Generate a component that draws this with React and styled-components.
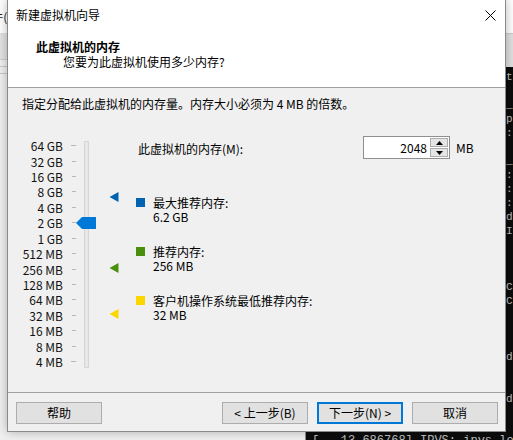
import React from 'react';
import styled, { createGlobalStyle } from 'styled-components';

const GlobalStyle = createGlobalStyle`
  html, body {
    margin: 0;
    padding: 0;
  }
  body {
    width: 513px;
    height: 440px;
    overflow: hidden;
    background: #f0f0f0;
    font-family: "Noto Sans CJK SC", "Noto Sans", sans-serif;
    font-size: 12px;
    color: #000;
  }
`;

const Desktop = styled.div`
  position: relative;
  width: 513px;
  height: 440px;
  overflow: hidden;
  background: #f0f0f0;
`;

/* windows behind the dialog */
const BackWindow = styled.div`
  position: absolute;
  left: -193px;
  top: 0;
  width: 211px;
  height: 440px;
  display: flex;
  flex-direction: column;
  background: #f0f0f0;
`;

const BackMenu = styled.div`
  height: 33px;
  background: #fff;
  display: flex;
  align-items: center;
  justify-content: flex-end;
  color: #222;
`;

const BackToolbar = styled.div`
  height: 26px;
  background: #e3e3e3;
  border-bottom: 1px solid #cfcfcf;
`;

const BackRule = styled.div`
  height: 1px;
  margin-top: 6px;
  background: #c8c8c8;
`;

const Terminal = styled.div`
  position: absolute;
  left: 305px;
  top: 0;
  width: 260px;
  height: 440px;
  display: flex;
  flex-direction: column;
  border-left: 1px solid #8c8c8c;
`;

const TermTitle = styled.div`
  height: 33px;
  background: #fff;
  border-bottom: 1px solid #cccccc;
`;

const TermToolbar = styled.div`
  height: 33px;
  background: #e1e1e1;
`;

const TermBody = styled.div`
  flex: 1;
  overflow: hidden;
  padding: 0 0 0 6px;
  background: #0c0c0c;
  display: flex;
  flex-direction: column;
  justify-content: flex-end;
`;

const TermLine = styled.div`
  padding-left: ${p => p.indent || 0}px;
  margin-bottom: ${p => (p.last ? '-8px' : '0')};
  color: #c0c0c0;
  font-family: "Liberation Mono", monospace;
  font-size: ${p => (p.last ? '12px' : '11px')};
  line-height: 14px;
  white-space: pre;
`;

/* dialog */
const Dialog = styled.div`
  position: absolute;
  left: 7px;
  top: -1px;
  width: 499px;
  height: 433px;
  box-sizing: border-box;
  border: 1px solid #8a8a8a;
  box-shadow: 0 0 10px rgba(0, 0, 0, 0.28);
  display: flex;
  flex-direction: column;
  background: #f0f0f0;
`;

const TitleBar = styled.div`
  height: 30px;
  flex: none;
  background: #fff;
  display: flex;
  align-items: center;
  padding: 0 9px 0 8px;
  line-height: 16px;
`;

const CloseIcon = styled.svg`
  margin-left: auto;
  margin-top: 1px;
  width: 11px;
  height: 11px;
`;

const Header = styled.div`
  height: 58px;
  flex: none;
  box-sizing: border-box;
  background: #fff;
  border-bottom: 1px solid #a0a0a0;
  padding: 9px 0 0 28px;
  display: flex;
  flex-direction: column;
`;

const HeaderTitle = styled.div`
  font-weight: 700;
  line-height: 15px;
`;

const HeaderSub = styled.div`
  line-height: 16px;
  padding-left: 27px;
`;

const Body = styled.div`
  flex: 1;
  padding: 8px 0 0 14px;
  display: flex;
  flex-direction: column;
`;

const Instruction = styled.div`
  line-height: 16px;
`;

const Main = styled.div`
  display: flex;
  margin-top: 24px;
`;

const Slider = styled.div`
  position: relative;
  width: 114px;
  margin-top: 2px;
  display: flex;
  align-items: flex-start;
`;

const Scale = styled.div`
  display: grid;
  grid-auto-rows: 15.43px;
`;

const ScaleRow = styled.div`
  display: flex;
  align-items: center;
`;

const ScaleLabel = styled.span`
  width: 41px;
  text-align: right;
  line-height: 15px;
  color: #111;
`;

const Tick = styled.span`
  margin-left: ${p => (p.edge ? '8px' : '9px')};
  width: ${p => (p.edge ? '5px' : '4px')};
  height: 1px;
  background: #b8b8b8;
`;

const Track = styled.div`
  margin: 3px 0 0 8px;
  width: 5px;
  height: 227px;
  box-sizing: border-box;
  border: 1px solid #d6d6d6;
  background: #e7e7e7;
`;

const Thumb = styled.svg`
  position: absolute;
  left: 54px;
  width: 20px;
  height: 12px;
`;

const Marker = styled.svg`
  position: absolute;
  left: 87px;
  width: 10px;
  height: 10px;
`;

const Panel = styled.div`
  display: flex;
  flex-direction: column;
`;

const MemoryRow = styled.div`
  display: flex;
  align-items: flex-start;
  height: 23px;
`;

const MemoryLabel = styled.span`
  width: 225px;
  padding-left: 2px;
  margin-top: 5px;
  line-height: 16px;
`;

const SpinBox = styled.div`
  width: 87px;
  height: 23px;
  box-sizing: border-box;
  border: 1px solid #8f8f8f;
  background: #fff;
  display: flex;
`;

const SpinValue = styled.span`
  flex: 1;
  text-align: right;
  padding-right: 3px;
  line-height: 21px;
`;

const Spinner = styled.div`
  width: 18px;
  display: flex;
  flex-direction: column;
  gap: 1px;
  padding: 1px 1px 1px 0;
`;

const SpinButton = styled.div`
  flex: 1;
  box-sizing: border-box;
  border: 1px solid #adadad;
  background: #e5e5e5;
  display: flex;
  align-items: center;
  justify-content: center;
`;

const Unit = styled.span`
  margin-left: 6px;
  line-height: 23px;
`;

const Legend = styled.div`
  display: flex;
  flex-direction: column;
  gap: 21px;
  margin-top: 37px;
`;

const LegendItem = styled.div`
  display: flex;
  gap: 8px;
`;

const Swatch = styled.span`
  width: 9px;
  height: 9px;
  margin-top: 2px;
  flex: none;
  background: ${p => p.color};
`;

const LegendText = styled.div`
  line-height: 14px;
`;

const Footer = styled.div`
  flex: none;
  height: 39px;
  box-sizing: border-box;
  border-top: 1px solid #a0a0a0;
  display: flex;
  align-items: flex-start;
  gap: 9px;
  padding: 9px 7px 0 8px;
`;

const Button = styled.button`
  width: 86px;
  height: 22px;
  margin-left: ${p => (p.push ? 'auto' : '0')};
  padding: 0;
  box-sizing: border-box;
  border: ${p => (p.primary ? '2px solid #0078d7' : '1px solid #adadad')};
  background: #e1e1e1;
  font-family: inherit;
  font-size: 12px;
  color: #000;
  line-height: 18px;
`;

const scale = ['64 GB', '32 GB', '16 GB', '8 GB', '4 GB', '2 GB', '1 GB', '512 MB', '256 MB', '128 MB', '64 MB', '32 MB', '16 MB', '8 MB', '4 MB'];

const ROW = 15.43;
// y of a value (in MB) on the log scale, relative to the slider top
const yOf = mb => ROW / 2 + Math.log2(65536 / mb) * ROW;

const markers = [
  { mb: 6348.8, color: '#0063b1' },
  { mb: 256, color: '#4a8f0b' },
  { mb: 32, color: '#fcd600' },
];

const legend = [
  { color: '#0063b1', title: '最大推荐内存:', value: '6.2 GB' },
  { color: '#4a8f0b', title: '推荐内存:', value: '256 MB' },
  { color: '#fcd600', title: '客户机操作系统最低推荐内存:', value: '32 MB' },
];

// only one column of each log line shows beside the dialog
const termTails = [
  't', '', '_', 'p', ':', '', '_', ':', ':', ':', 'd', 'I',
  '', '', '', 'C', 'C', '', '', '', 'd', '', '', 'd', '', '',
];

const App = () => (
  <Desktop>
    <GlobalStyle />

    <BackWindow>
      <BackMenu>文件(F)</BackMenu>
      <BackToolbar />
      <BackRule />
      <BackRule />
    </BackWindow>

    <Terminal>
      <TermTitle />
      <TermToolbar />
      <TermBody>
        {termTails.map((t, i) => (
          <TermLine key={i} indent={194}>{t || ' '}</TermLine>
        ))}
        <TermLine last>[   13.686768] IPVS: ipvs loaded.  :12</TermLine>
      </TermBody>
    </Terminal>

    <Dialog>
      <TitleBar>
        新建虚拟机向导
        <CloseIcon viewBox="0 0 11 11">
          <path d="M0.5 0.5 L10.5 10.5 M10.5 0.5 L0.5 10.5" stroke="#000" strokeWidth="1" fill="none" />
        </CloseIcon>
      </TitleBar>

      <Header>
        <HeaderTitle>此虚拟机的内存</HeaderTitle>
        <HeaderSub>您要为此虚拟机使用多少内存?</HeaderSub>
      </Header>

      <Body>
        <Instruction>指定分配给此虚拟机的内存量。内存大小必须为 4 MB 的倍数。</Instruction>

        <Main>
          <Slider>
            <Scale>
              {scale.map((label, i) => (
                <ScaleRow key={label}>
                  <ScaleLabel>{label}</ScaleLabel>
                  <Tick edge={i === 0 || i === scale.length - 1} />
                </ScaleRow>
              ))}
            </Scale>
            <Track />
            <Thumb viewBox="0 0 20 12" style={{ top: yOf(2048) - 5.5 }}>
              <polygon points="0,6 6,0 20,0 20,12 6,12" fill="#0078d7" />
            </Thumb>
            {markers.map(m => (
              <Marker key={m.mb} viewBox="0 0 10 10" style={{ top: yOf(m.mb) - 6 }}>
                <polygon points="0.5,5 9.5,0 9.5,10" fill={m.color} />
              </Marker>
            ))}
          </Slider>

          <Panel>
            <MemoryRow>
              <MemoryLabel>此虚拟机的内存(M):</MemoryLabel>
              <SpinBox>
                <SpinValue>2048</SpinValue>
                <Spinner>
                  <SpinButton>
                    <svg width="7" height="4" viewBox="0 0 7 4">
                      <polygon points="3.5,0 7,4 0,4" fill="#000" />
                    </svg>
                  </SpinButton>
                  <SpinButton>
                    <svg width="7" height="4" viewBox="0 0 7 4">
                      <polygon points="0,0 7,0 3.5,4" fill="#000" />
                    </svg>
                  </SpinButton>
                </Spinner>
              </SpinBox>
              <Unit>MB</Unit>
            </MemoryRow>

            <Legend>
              {legend.map(item => (
                <LegendItem key={item.title}>
                  <Swatch color={item.color} />
                  <LegendText>
                    <div>{item.title}</div>
                    <div>{item.value}</div>
                  </LegendText>
                </LegendItem>
              ))}
            </Legend>
          </Panel>
        </Main>
      </Body>

      <Footer>
        <Button>帮助</Button>
        <Button push>&lt; 上一步(B)</Button>
        <Button primary>下一步(N) &gt;</Button>
        <Button>取消</Button>
      </Footer>
    </Dialog>
  </Desktop>
);

export default App;
